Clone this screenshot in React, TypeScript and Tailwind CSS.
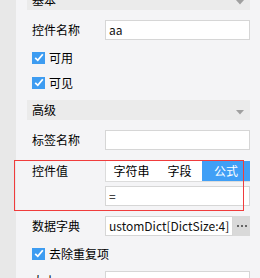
import React from "react";

const font = { fontFamily: '"Noto Sans CJK SC", "Liberation Sans", sans-serif' };

const Arrow = () => (
  <svg width="8" height="5" viewBox="0 0 8 5" className="absolute right-[6px] top-[10px]">
    <path d="M0 0 L8 0 L4 4.5 Z" fill="#a0a0a0" />
  </svg>
);

const Section = ({ title, className = "" }: { title: string; className?: string }) => (
  <div className={`relative shrink-0 h-[20px] bg-[#ebebeb] pl-[5px] flex items-center text-[12px] text-black ${className}`}>
    {title}
    <Arrow />
  </div>
);

const Check = ({ label, className = "" }: { label: string; className?: string }) => (
  <div className={`shrink-0 h-[25px] flex items-center pl-[5px] gap-[4px] text-[12px] text-black ${className}`}>
    <span className="w-[13px] h-[12px] bg-[#3d9cf1] flex items-center justify-center">
      <svg width="10" height="9" viewBox="0 0 10 9">
        <path d="M1.2 4.8 L3.8 7.3 L8.8 1.2" stroke="#fff" strokeWidth="1.8" fill="none" />
      </svg>
    </span>
    {label}
  </div>
);

const Row = ({ label, children, className = "" }: { label: string; children: React.ReactNode; className?: string }) => (
  <div className={`shrink-0 flex ${className}`}>
    <div className="w-[78px] shrink-0 pl-[5px] h-[20px] flex items-center text-[12px] text-black">{label}</div>
    <div className="flex-1 min-w-0">{children}</div>
  </div>
);

const Input = ({ value = "" }: { value?: string }) => (
  <div className="h-[20px] bg-white border border-[#d6d6d6] pl-[3px] flex items-center text-[12px] text-[#111] overflow-hidden whitespace-nowrap">
    {value}
  </div>
);

export default function App() {
  return (
    <div className="relative w-[260px] h-[278px] overflow-hidden bg-[#f4f4f6] flex" style={font}>
      <div className="w-[16px] shrink-0 bg-[#e8e8e8]" />
      <div className="flex-1 pl-[11px] pr-[10px] flex flex-col">
        <Section title="基本" className="-mt-[10px]" />
        <Row label="控件名称" className="mt-[10px]">
          <Input value="aa" />
        </Row>
        <Check label="可用" className="mt-[5px]" />
        <Check label="可见" />
        <Section title="高级" className="mt-[5px]" />
        <Row label="标签名称" className="mt-[10px]">
          <Input />
        </Row>
        <Row label="控件值" className="mt-[11px]">
          <div className="h-[21px] flex bg-white border-l border-b border-[#dcdcdc] text-[12px]">
            <div className="w-[51px] flex items-center justify-center text-black">字符串</div>
            <div className="w-[45px] flex items-center justify-center text-black">字段</div>
            <div className="flex-1 flex items-center justify-center bg-[#409ff6] text-white">公式</div>
          </div>
          <div className="mt-[4px]">
            <Input value="=" />
          </div>
        </Row>
        <Row label="数据字典" className="mt-[10px]">
          <div className="flex h-[20px]">
            <div className="flex-1 min-w-0">
              <Input value="ustomDict[DictSize:4]" />
            </div>
            <div className="w-[17px] bg-[#d9d9d9] flex items-center justify-center gap-[2px]">
              <span className="w-[2px] h-[2px] bg-[#666]" />
              <span className="w-[2px] h-[2px] bg-[#666]" />
              <span className="w-[2px] h-[2px] bg-[#666]" />
            </div>
          </div>
        </Row>
        <Check label="去除重复项" className="mt-[5px]" />
        <Row label="大小" className="mt-[5px]">
          <Input />
        </Row>
      </div>
      <div className="absolute left-[14px] top-[160px] w-[230px] h-[51px] border border-[#f03c3c] pointer-events-none" />
    </div>
  );
}
